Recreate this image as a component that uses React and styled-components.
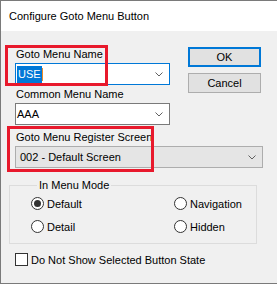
import React from "react";
import styled, { createGlobalStyle } from "styled-components";

const GlobalStyle = createGlobalStyle`
  body {
    margin: 0;
    font-family: "Liberation Sans", Arial, sans-serif;
    font-size: 11px;
    color: #000;
  }
`;

const Window = styled.div`
  width: 277px;
  height: 284px;
  box-sizing: border-box;
  border-top: 1px solid #7a7a7a;
  border-left: 1px solid #7a7a7a;
  border-bottom: 1px solid #7a7a7a;
  display: flex;
  flex-direction: column;
  overflow: hidden;
`;

const TitleBar = styled.div`
  height: 30px;
  background: #fff;
  display: flex;
  align-items: center;
  padding-left: 8px;
  font-size: 11px;
  flex-shrink: 0;
`;

const Body = styled.div`
  flex: 1;
  background: #f0f0f0;
  position: relative;
  padding: 16px 16px 0 8px;
`;

const TopRow = styled.div`
  display: flex;
  justify-content: space-between;
`;

const Fields = styled.div`
  display: flex;
  flex-direction: column;
  margin-left: 6px;
`;

const FieldLabel = styled.div`
  line-height: 15px;
  margin-top: ${(p) => p.$gap || 0}px;
  margin-left: 1px;
`;

const Combo = styled.div`
  box-sizing: border-box;
  width: ${(p) => p.$width}px;
  height: 22px;
  margin-top: 1px;
  border: 1px solid ${(p) => (p.$focused ? "#0078d7" : p.$list ? "#adadad" : "#7a7a7a")};
  background: ${(p) => (p.$list ? "#e5e5e5" : "#fff")};
  display: flex;
  align-items: center;
  padding-left: ${(p) => (p.$list ? 4 : 1)}px;
  padding-right: 6px;
`;

const ComboText = styled.span`
  flex: 1;
  white-space: nowrap;
  display: flex;
  align-items: center;
`;

const Selected = styled.span`
  background: #0078d7;
  color: #fff;
  height: 17px;
  line-height: 17px;
  padding: 0 1px;
`;

const Caret = styled.span`
  width: 1.5px;
  height: 13px;
  background: #f08a24;
`;

const Chevron = () => (
  <svg width="8" height="5" viewBox="0 0 8 5">
    <polyline points="0.5,0.5 4,4 7.5,0.5" fill="none" stroke="#606060" strokeWidth="1" />
  </svg>
);

const Buttons = styled.div`
  display: flex;
  flex-direction: column;
  gap: 6px;
`;

const Button = styled.button`
  box-sizing: border-box;
  width: 73px;
  height: 20px;
  padding: 0;
  font-family: inherit;
  font-size: 11px;
  background: #e1e1e1;
  border: ${(p) => (p.$default ? "2px solid #0078d7" : "1px solid #adadad")};
  color: #000;
`;

const Group = styled.fieldset`
  margin: 10px 0 0 0;
  width: 248px;
  box-sizing: border-box;
  border: 1px solid #dcdcdc;
  padding: 4px 0 10px 21px;
`;

const Legend = styled.legend`
  margin-left: 6px;
  padding: 0 2px;
  line-height: 15px;
`;

const RadioGrid = styled.div`
  display: grid;
  grid-template-columns: 143px auto;
  row-gap: 10px;
`;

const Option = styled.label`
  display: flex;
  align-items: center;
  gap: 3px;
  height: 13px;
  white-space: nowrap;
`;

const RadioDot = styled.span`
  box-sizing: border-box;
  width: 13px;
  height: 13px;
  border-radius: 50%;
  border: 1px solid #333;
  background: #fff;
  display: flex;
  align-items: center;
  justify-content: center;
  &::after {
    content: "";
    width: 7px;
    height: 7px;
    border-radius: 50%;
    background: ${(p) => (p.$checked ? "#333" : "transparent")};
  }
`;

const CheckRow = styled(Option)`
  margin: 9px 0 0 6px;
`;

const CheckBox = styled.span`
  box-sizing: border-box;
  width: 13px;
  height: 13px;
  border: 1px solid #333;
  background: #fff;
`;

const Annotation = styled.div`
  position: absolute;
  left: ${(p) => p.$x}px;
  top: ${(p) => p.$y}px;
  width: ${(p) => p.$w}px;
  height: ${(p) => p.$h}px;
  box-sizing: border-box;
  border: 3px solid #e8192c;
  pointer-events: none;
`;

const modes = [
  { label: "Default", checked: true },
  { label: "Navigation" },
  { label: "Detail" },
  { label: "Hidden" },
];

export default function App() {
  return (
    <>
      <GlobalStyle />
      <Window>
        <TitleBar>Configure Goto Menu Button</TitleBar>
        <Body>
          <TopRow>
            <Fields>
              <FieldLabel>Goto Menu Name</FieldLabel>
              <Combo $width={155} $focused>
                <ComboText>
                  <Selected>USE</Selected>
                  <Caret />
                </ComboText>
                <Chevron />
              </Combo>
              <FieldLabel $gap={2}>Common Menu Name</FieldLabel>
              <Combo $width={155}>
                <ComboText>AAA</ComboText>
                <Chevron />
              </Combo>
            </Fields>
            <Buttons>
              <Button $default>OK</Button>
              <Button>Cancel</Button>
            </Buttons>
          </TopRow>
          <Fields>
            <FieldLabel $gap={5}>Goto Menu Register Screen</FieldLabel>
            <Combo $width={248} $list>
              <ComboText>002 - Default Screen</ComboText>
              <Chevron />
            </Combo>
          </Fields>
          <Group>
            <Legend>In Menu Mode</Legend>
            <RadioGrid>
              {modes.map((m) => (
                <Option key={m.label}>
                  <RadioDot $checked={m.checked} />
                  {m.label}
                </Option>
              ))}
            </RadioGrid>
          </Group>
          <CheckRow>
            <CheckBox />
            Do Not Show Selected Button State
          </CheckRow>
          <Annotation $x={4} $y={14} $w={103} $h={41} />
          <Annotation $x={6} $y={95} $w={147} $h={46} />
        </Body>
      </Window>
    </>
  );
}
